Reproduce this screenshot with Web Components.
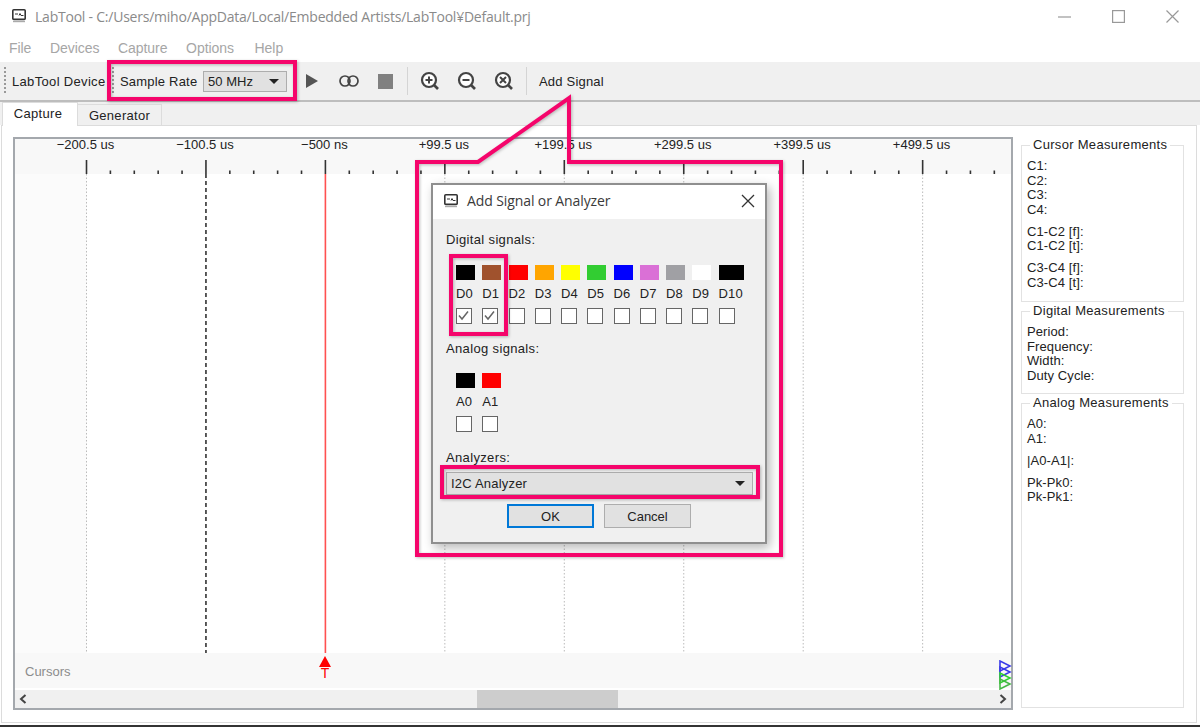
<!DOCTYPE html>
<html>
<head>
<meta charset="utf-8">
<title>LabTool</title>
<style>
html, body { margin: 0; padding: 0; background: #fff; overflow: hidden; }
</style>
</head>
<body>
<lab-app></lab-app>
<script>
// Elements with fixed markup only need a shadow root and their template
function plain(name, html) {
  const template = document.createElement('template');
  template.innerHTML = html;
  customElements.define(name, class extends HTMLElement {
    constructor() {
      super();
      this.attachShadow({ mode: 'open' }).appendChild(template.content.cloneNode(true));
    }
  });
}

const appIcon = `<svg width="14" height="14" viewBox="0 0 14 14"><rect x="0.8" y="0.8" width="12.4" height="9.6" rx="1" fill="#fff" stroke="#333" stroke-width="1.6"/><path d="M3 5h3M7 6.5l1-2 1 2h2.5" fill="none" stroke="#333" stroke-width="1"/><path d="M1 12.5h12" stroke="#aaa" stroke-width="1.4"/></svg>`;

plain('title-bar', `<style>
:host { display: flex; align-items: center; height: 32px; padding-left: 12px; color: #8a8a8a; font: 14px "Open Sans", sans-serif; }
span { margin-left: 9px; letter-spacing: -0.23px; flex: 1; white-space: nowrap; }
.ctls { display: flex; align-items: center; gap: 41px; padding-right: 21px; }
</style>${appIcon}<span>LabTool - C:/Users/miho/AppData/Local/Embedded Artists/LabTool¥Default.prj</span>
<div class="ctls">
<svg width="13" height="13" viewBox="0 0 13 13"><path d="M0 7h13" stroke="#999" stroke-width="1.2"/></svg>
<svg width="13" height="13" viewBox="0 0 13 13"><rect x="0.6" y="0.6" width="11.8" height="11.8" fill="none" stroke="#999" stroke-width="1.2"/></svg>
<svg width="13" height="13" viewBox="0 0 13 13"><path d="M0.5 0.5l12 12M12.5 0.5l-12 12" stroke="#999" stroke-width="1.2"/></svg>
</div>`);

plain('menu-bar', `<style>
:host { display: flex; align-items: center; box-sizing: border-box; height: 30px; padding: 2px 0 0 9px; gap: 18.6px; color: #a6a6a6; letter-spacing: -0.05px; font: 14px "Liberation Sans", sans-serif; }
span:last-child { margin-left: 2px; }
</style><span>File</span><span>Devices</span><span>Capture</span><span>Options</span><span>Help</span>`);

plain('combo-box', `<style>
:host { display: flex; align-items: center; justify-content: space-between; box-sizing: border-box; background: #e1e1e1; border: 1px solid #adadad; padding: 0 7px 0 4px; color: #222; }
i { width: 0; height: 0; border: 5px solid transparent; border-top: 5px solid #222; border-bottom: 0; }
</style><span><slot></slot></span><i></i>`);

const zoomIcon = (mark) => `<svg width="20" height="20" viewBox="0 0 20 20"><circle cx="9" cy="9" r="7" fill="#fff" stroke="#444" stroke-width="2.2"/><path d="M14 14l4 4" stroke="#444" stroke-width="2.6"/><path d="${mark}" stroke="#444" stroke-width="2" fill="none"/></svg>`;

plain('tool-bar', `<style>
:host { display: flex; align-items: center; box-sizing: border-box; height: 40px; background: #f0f0f0; border-bottom: 2px solid #bdbdbd; padding-left: 4px; color: #222; }
.grip { width: 2px; height: 28px; background: repeating-linear-gradient(#999 0 2px, transparent 2px 4px); }
.label { letter-spacing: 0.33px; white-space: nowrap; }
.cell { width: 37px; display: flex; justify-content: center; align-items: center; }
.sep { width: 1px; height: 28px; background: #d4d4d4; }
combo-box { width: 84px; height: 21px; margin-right: 6px; letter-spacing: 0.05px; }
</style>
<div class="grip"></div>
<div class="label" style="width:96px;margin-left:6px">LabTool Device</div>
<div class="grip" style="margin-left:4px"></div>
<div class="label" style="width:83px;margin-left:6px;letter-spacing:.2px">Sample Rate</div>
<combo-box>50 MHz</combo-box>
<div class="cell"><svg width="12" height="14" viewBox="0 0 12 14"><path d="M0 0l12 7-12 7z" fill="#555"/></svg></div>
<div class="cell"><svg width="20" height="12" viewBox="0 0 20 12"><rect x="1" y="1" width="10" height="10" rx="5" fill="none" stroke="#444" stroke-width="1.7"/><rect x="9" y="1" width="10" height="10" rx="5" fill="none" stroke="#444" stroke-width="1.7"/></svg></div>
<div class="cell"><svg width="15" height="15"><rect width="15" height="15" fill="#808080"/></svg></div>
<div class="sep" style="margin-left:3px"></div>
<div class="cell" style="margin-left:3.5px">${zoomIcon('M5.5 9h7M9 5.5v7')}</div>
<div class="cell">${zoomIcon('M5.5 9h7')}</div>
<div class="cell">${zoomIcon('M6 6l6 6M12 6l-6 6')}</div>
<div class="sep" style="margin-left:3.5px"></div>
<div class="label" style="margin-left:12px;letter-spacing:.2px">Add Signal</div>`);

plain('tab-strip', `<style>
:host { display: flex; align-items: flex-end; height: 23px; padding-left: 2px; background: #f0f0f0; letter-spacing: 0.3px; color: #222; position: relative; }
div { display: flex; align-items: center; justify-content: center; box-sizing: border-box; }
.on { width: 76px; height: 24px; background: #fff; padding: 0 4px 2px 0; border: 1px solid #dcdcdc; border-bottom: 0; position: relative; margin-bottom: -1px; }
.off { width: 84px; height: 21px; background: #f0f0f0; padding-top: 1px; border: 1px solid #dcdcdc; border-left: 0; border-bottom: 0; }
</style><div class="on">Capture</div><div class="off">Generator</div>`);

// Ruler, grid and cursor strip of the logic analyzer plot
const MAJOR_X = 71.5;
const MAJOR_STEP = 119.45;

class SignalPlot extends HTMLElement {
  constructor() {
    super();
    const labels = ['-200.5 us', '-100.5 us', '-500 ns', '+99.5 us', '+199.5 us', '+299.5 us', '+399.5 us', '+499.5 us'];
    let ticks = '';
    let grid = '';
    for (let m = 0; m < 8; m++) {
      const x = MAJOR_X + m * MAJOR_STEP;
      ticks += `<path d="M${x} 21v14" stroke="#333" stroke-width="1.6"/>`;
      for (let n = 1; n < 5; n++) {
        const mx = x + n * MAJOR_STEP / 5;
        if (mx < 996) ticks += `<path d="M${mx} 31.5v3.5" stroke="#333" stroke-width="1.6"/>`;
      }
      let style = 'stroke="#bbb" stroke-width="1" stroke-dasharray="1.5 2"';
      if (m === 1) style = 'stroke="#333" stroke-width="1.6" stroke-dasharray="4 3"';
      if (m === 2) style = 'stroke="#ff5050" stroke-width="1.6"';
      grid += `<path d="M${x} 0V479" ${style}/>`;
    }
    this.attachShadow({ mode: 'open' }).innerHTML = `<style>
:host { display: flex; flex-direction: column; box-sizing: border-box; width: 1000px; height: 573px; border: 2px solid #a4a8ad; background: #fff; color: #222; }
.ruler { position: relative; height: 35px; background: #f8f8f8; flex: none; }
.ruler svg { position: absolute; left: 0; top: 0; }
.labels { display: flex; padding-left: ${MAJOR_X - MAJOR_STEP / 2 - 1}px; height: 15px; }
.labels span { flex: none; width: ${MAJOR_STEP}px; text-align: center; line-height: 11px; white-space: nowrap; }
.grid { flex: 1; display: block; background: linear-gradient(90deg, #fbfbfb 0 ${MAJOR_X}px, #fff ${MAJOR_X}px); }
.cursors { position: relative; box-sizing: border-box; height: 35px; flex: none; background: #f8f8f8; color: #8c8c8c; display: flex; align-items: center; padding: 2px 0 0 10px; }
.trig { position: absolute; left: 303px; top: 3px; width: 14px; display: flex; flex-direction: column; align-items: center; color: #f00; }
.trig i { width: 0; height: 0; border: 6px solid transparent; border-bottom: 11px solid #f00; border-top: 0; }
.trig span { line-height: 12px; font-size: 14px; }
.marks { position: absolute; right: -1px; top: 7px; }
.bar { display: flex; align-items: center; justify-content: space-between; height: 18px; margin-top: 2px; background: #f0f0f0; flex: none; position: relative; padding: 0 4px; box-sizing: border-box; }
.thumb { position: absolute; left: 462px; width: 141px; top: 0; bottom: 0; background: #cdcdcd; }
</style>
<div class="ruler">
  <svg width="996" height="35">${ticks}</svg>
  <div class="labels">${labels.map((t) => `<span>${t.replace('-', '\u2212')}</span>`).join('')}</div>
</div>
<svg class="grid" width="996" height="479">${grid}</svg>
<div class="cursors">Cursors
  <div class="trig"><i></i><span>T</span></div>
  <svg class="marks" width="13" height="30" viewBox="0 0 13 30" fill="none" stroke-width="1.6">
    <path d="M1 1v10l10-5z" stroke="#3a3ae8"/><path d="M1 7v10l10-5z" stroke="#3a3ae8"/>
    <path d="M1 13v10l10-5z" stroke="#2ed02e"/><path d="M1 19v10l10-5z" stroke="#46b846"/>
  </svg>
</div>
<div class="bar">
  <svg width="8" height="10" viewBox="0 0 8 10"><path d="M6.5 1L2 5l4.5 4" fill="none" stroke="#444" stroke-width="2"/></svg>
  <div class="thumb"></div>
  <svg width="8" height="10" viewBox="0 0 8 10"><path d="M1.5 1L6 5 1.5 9" fill="none" stroke="#444" stroke-width="2"/></svg>
</div>`;
  }
}
customElements.define('signal-plot', SignalPlot);

class GroupBox extends HTMLElement {
  constructor() {
    super();
    this.attachShadow({ mode: 'open' }).innerHTML = `<style>
:host { display: block; }
fieldset { box-sizing: border-box; height: 100%; margin: 0; padding: 6px 0 0 5px; border: 1.5px solid #e2e2e2; min-width: 0; }
legend { margin-left: 3px; padding: 0 3px; line-height: 16px; letter-spacing: 0.3px; color: #222; }
</style><fieldset><legend>${this.getAttribute('label')}</legend><slot></slot></fieldset>`;
  }
}
customElements.define('group-box', GroupBox);

plain('side-panel', `<style>
:host { display: flex; flex-direction: column; gap: 1px; width: 163px; line-height: 14.5px; color: #222; letter-spacing: 0.1px; }
.g { margin-top: 7.7px; }
</style>
<group-box label="Cursor Measurements" style="height:165px">
  <div>C1:</div><div>C2:</div><div>C3:</div><div>C4:</div>
  <div class="g">C1-C2 [f]:</div><div>C1-C2 [t]:</div>
  <div class="g">C3-C4 [f]:</div><div>C3-C4 [t]:</div>
</group-box>
<group-box label="Digital Measurements" style="height:91px">
  <div>Period:</div><div>Frequency:</div><div>Width:</div><div>Duty Cycle:</div>
</group-box>
<group-box label="Analog Measurements" style="height:313px">
  <div>A0:</div><div>A1:</div>
  <div class="g">|A0-A1|:</div>
  <div class="g">Pk-Pk0:</div><div>Pk-Pk1:</div>
</group-box>`);

// Colour swatch, name and check box per channel
class SignalPick extends HTMLElement {
  constructor() {
    super();
    const items = JSON.parse(this.getAttribute('items'));
    const cols = items.map((it) => (it.wide ? '34px' : '26.25px')).join(' ');
    const cells = items.map((it) => `<div class="sig">
      <i class="sw" style="background:${it.color};width:${it.wide ? 25 : 19}px"></i>
      <span>${it.name}</span>
      <b class="box">${it.on ? '<svg width="13" height="13" viewBox="0 0 13 13"><path d="M2 6.5l3 3.5 6-7.5" fill="none" stroke="#666" stroke-width="1.5"/></svg>' : ''}</b>
    </div>`).join('');
    this.attachShadow({ mode: 'open' }).innerHTML = `<style>
:host { display: grid; grid-template-columns: ${cols}; justify-content: start; margin-left: 10px; }
.sig { display: flex; flex-direction: column; align-items: flex-start; }
.sw { display: block; height: 15px; }
span { line-height: 16px; margin-top: 6px; height: 16px; white-space: nowrap; letter-spacing: 0.2px; }
.box { display: flex; box-sizing: border-box; width: 16px; height: 16px; margin-top: 6px; background: #fff; border: 1.5px solid #666; }
</style>${cells}`;
  }
}
customElements.define('signal-pick', SignalPick);

const digital = ['#000', '#a0522d', '#f00', '#ffa500', '#ff0', '#32cd32', '#00f', '#da70d6', '#a0a0a4', '#fff', '#000']
  .map((color, i) => ({ color, name: 'D' + i, on: i < 2, wide: i === 10 }));
const analog = [{ color: '#000', name: 'A0' }, { color: '#f00', name: 'A1' }];

plain('add-dialog', `<style>
:host { position: absolute; left: 431px; top: 183px; width: 336px; height: 361px; box-sizing: border-box; border: 2px solid #8f8f8f; background: #f0f0f0; box-shadow: 3px 4px 10px rgba(0,0,0,.28); color: #222; }
.head { display: flex; align-items: center; box-sizing: border-box; height: 34px; padding: 0 0 3px 11px; background: #fff; font: 14px "Open Sans", sans-serif; color: #3a3a3a; }
.head span { margin-left: 9px; flex: 1; letter-spacing: -0.1px; }
.head svg.x { margin-right: 10px; }
.body { padding: 13px 0 0 13px; }
.t { line-height: 16px; letter-spacing: 0.35px; }
combo-box { width: 307px; height: 23px; margin-top: 6px; letter-spacing: 0.2px; }
.btns { display: flex; gap: 10px; margin: 9px 0 0 61px; }
.btn { display: flex; align-items: center; justify-content: center; box-sizing: border-box; width: 87px; height: 24px; background: #e1e1e1; border: 1px solid #adadad; }
.def { border: 2px solid #0078d7; }
</style>
<div class="head">${appIcon}<span>Add Signal or Analyzer</span>
  <svg class="x" width="14" height="14" viewBox="0 0 14 14"><path d="M1 1l12 12M13 1L1 13" stroke="#333" stroke-width="1.3"/></svg>
</div>
<div class="body">
  <div class="t">Digital signals:</div>
  <signal-pick style="margin-top:17px" items='${JSON.stringify(digital)}'></signal-pick>
  <div class="t" style="margin-top:17px">Analog signals:</div>
  <signal-pick style="margin-top:16px" items='${JSON.stringify(analog)}'></signal-pick>
  <div class="t" style="margin-top:18px">Analyzers:</div>
  <combo-box>I2C Analyzer</combo-box>
  <div class="btns"><div class="btn def">OK</div><div class="btn">Cancel</div></div>
</div>`);

// The magenta annotations drawn over the screenshot
plain('call-outs', `<style>
:host { position: absolute; left: 0; top: 0; pointer-events: none; }
svg { display: block; filter: drop-shadow(1px 1px 1.5px rgba(0,0,0,.25)); }
</style>
<svg width="1200" height="727" fill="none" stroke="#f5056b" stroke-width="4" stroke-linejoin="miter">
  <rect x="109" y="62" width="186" height="37"/>
  <path d="M417 162H478L569 98V162H781V555H417Z"/>
  <rect x="451" y="256" width="55" height="78"/>
  <rect x="442" y="467" width="316" height="30"/>
</svg>`);

plain('lab-app', `<style>
:host { display: flex; flex-direction: column; position: relative; width: 1200px; height: 727px; overflow: hidden; background: #fff; font: 13px "Liberation Sans", sans-serif; }
.pane { display: flex; gap: 8px; box-sizing: border-box; width: 1196px; height: 598px; margin-left: 1px; padding: 11px 0 0 11px; background: #fff; border: 1px solid #dcdcdc; }
.foot { height: 2px; margin-top: auto; background: #333; }
</style>
<title-bar></title-bar>
<menu-bar></menu-bar>
<tool-bar></tool-bar>
<tab-strip></tab-strip>
<div class="pane"><signal-plot></signal-plot><side-panel></side-panel></div>
<div class="foot"></div>
<add-dialog></add-dialog>
<call-outs></call-outs>`);
</script>
</body>
</html>
